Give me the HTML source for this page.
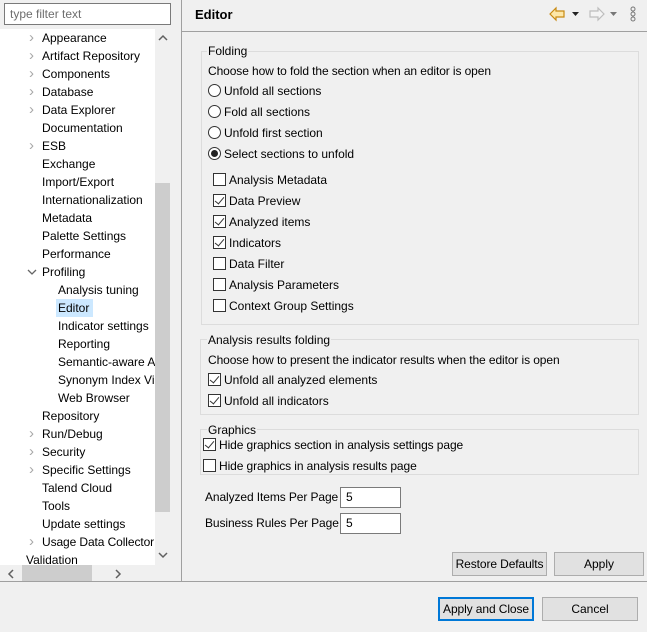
<!DOCTYPE html>
<html><head><meta charset="utf-8"><style>
*{box-sizing:border-box;margin:0;padding:0}
body{width:647px;height:632px;background:#f0f0f0;font-family:"Liberation Sans",sans-serif;font-size:12px;color:#000;position:relative;overflow:hidden}
.a{position:absolute;white-space:nowrap;line-height:16px}
.t{position:absolute;white-space:nowrap;line-height:18px;height:18px}
.chev{position:absolute;color:#a8a8a8;font-size:15px;line-height:18px}
.box{position:absolute;border:1px solid #dcdcdc}
.leg{position:absolute;background:#f0f0f0;padding:0 1px;line-height:14px}
.rb{position:absolute;width:13px;height:13px;border:1px solid #333;border-radius:50%;background:#fff}
.cb{position:absolute;width:13px;height:13px;border:1px solid #333;background:#fff}
.cb.c::after{content:"";position:absolute;left:3px;top:0px;width:4px;height:8px;border:solid #333;border-width:0 1.3px 1.3px 0;transform:rotate(40deg)}
.btn{position:absolute;border:1px solid #adadad;background:#e1e1e1;text-align:center;line-height:22px}
.inp{position:absolute;border:1px solid #7a7a7a;background:#fff;padding-left:5px;line-height:18px}
.sm{letter-spacing:-0.1px}
</style></head><body>
<div class="inp" style="left:4px;top:3px;width:167px;height:22px;color:#6d6d6d;line-height:20px">type filter text</div>
<div style="position:absolute;left:0;top:29px;width:155px;height:536px;background:#fff"></div>
<div style="position:absolute;left:155px;top:29px;width:15px;height:536px;background:#f0f0f0"></div>
<div style="position:absolute;left:155px;top:183px;width:15px;height:329px;background:#cdcdcd"></div>
<svg style="position:absolute;left:158px;top:34px" width="10" height="8"><path d="M1 6 L5 2 L9 6" fill="none" stroke="#606060" stroke-width="1.5"/></svg>
<svg style="position:absolute;left:158px;top:551px" width="10" height="8"><path d="M1 2 L5 6 L9 2" fill="none" stroke="#606060" stroke-width="1.5"/></svg>
<div style="position:absolute;left:0;top:565px;width:155px;height:16px;background:#f0f0f0"></div>
<div style="position:absolute;left:22px;top:565px;width:70px;height:16px;background:#cdcdcd"></div>
<svg style="position:absolute;left:7px;top:569px" width="8" height="10"><path d="M6 1 L2 5 L6 9" fill="none" stroke="#606060" stroke-width="1.5"/></svg>
<svg style="position:absolute;left:114px;top:569px" width="8" height="10"><path d="M2 1 L6 5 L2 9" fill="none" stroke="#606060" stroke-width="1.5"/></svg>
<div style="position:absolute;left:56px;top:299px;width:37px;height:18px;background:#cce8ff"></div>

<div class="chev" style="left:29px;top:29px">›</div><div class="t" style="left:42px;top:29px">Appearance</div>
<div class="chev" style="left:29px;top:47px">›</div><div class="t" style="left:42px;top:47px">Artifact Repository</div>
<div class="chev" style="left:29px;top:65px">›</div><div class="t" style="left:42px;top:65px">Components</div>
<div class="chev" style="left:29px;top:83px">›</div><div class="t" style="left:42px;top:83px">Database</div>
<div class="chev" style="left:29px;top:101px">›</div><div class="t" style="left:42px;top:101px">Data Explorer</div>
<div class="t" style="left:42px;top:119px">Documentation</div>
<div class="chev" style="left:29px;top:137px">›</div><div class="t" style="left:42px;top:137px">ESB</div>
<div class="t" style="left:42px;top:155px">Exchange</div>
<div class="t" style="left:42px;top:173px">Import/Export</div>
<div class="t" style="left:42px;top:191px;width:113px;overflow:hidden">Internationalization</div>
<div class="t" style="left:42px;top:209px">Metadata</div>
<div class="t" style="left:42px;top:227px">Palette Settings</div>
<div class="t" style="left:42px;top:245px">Performance</div>
<svg style="position:absolute;left:27px;top:268px" width="10" height="8"><path d="M1 2 L5 6 L9 2" fill="none" stroke="#666" stroke-width="1.3"/></svg><div class="t" style="left:42px;top:263px">Profiling</div>
<div class="t" style="left:58px;top:281px">Analysis tuning</div>
<div class="t" style="left:58px;top:299px">Editor</div>
<div class="t" style="left:58px;top:317px;width:97px;overflow:hidden">Indicator settings</div>
<div class="t" style="left:58px;top:335px">Reporting</div>
<div class="t" style="left:58px;top:353px;width:97px;overflow:hidden">Semantic-aware Analysis</div>
<div class="t" style="left:58px;top:371px;width:97px;overflow:hidden">Synonym Index Viewer</div>
<div class="t" style="left:58px;top:389px">Web Browser</div>
<div class="t" style="left:42px;top:407px">Repository</div>
<div class="chev" style="left:29px;top:425px">›</div><div class="t" style="left:42px;top:425px">Run/Debug</div>
<div class="chev" style="left:29px;top:443px">›</div><div class="t" style="left:42px;top:443px">Security</div>
<div class="chev" style="left:29px;top:461px">›</div><div class="t" style="left:42px;top:461px">Specific Settings</div>
<div class="t" style="left:42px;top:479px">Talend Cloud</div>
<div class="t" style="left:42px;top:497px">Tools</div>
<div class="t" style="left:42px;top:515px">Update settings</div>
<div class="chev" style="left:29px;top:533px">›</div><div class="t sm" style="left:42px;top:533px;width:113px;overflow:hidden">Usage Data Collector</div>
<div class="t" style="left:26px;top:551px">Validation</div>

<div style="position:absolute;left:181px;top:0;width:1px;height:581px;background:#a0a0a0"></div>
<div style="position:absolute;left:182px;top:31px;width:465px;height:1px;background:#a0a0a0"></div>
<div style="position:absolute;left:0;top:581px;width:647px;height:1px;background:#a0a0a0"></div>
<div class="a" style="left:195px;top:7px;font-weight:bold;font-size:13px">Editor</div>
<svg style="position:absolute;left:548px;top:6px" width="95" height="16">
<path d="M2 8 L8 2 L8 5 L16 5 L16 11 L8 11 L8 14 Z" fill="#fde7a8" stroke="#c88a12" stroke-width="1.2"/>
<path d="M24 6 L31 6 L27.5 10 Z" fill="#222"/>
<path d="M56 8 L50 2 L50 5 L42 5 L42 11 L50 11 L50 14 Z" fill="#f4f4f4" stroke="#bdbdbd" stroke-width="1.2"/>
<path d="M62 6 L69 6 L65.5 10 Z" fill="#777"/>
<circle cx="85" cy="3" r="2" fill="none" stroke="#777"/><circle cx="85" cy="8" r="2" fill="none" stroke="#777"/><circle cx="85" cy="13" r="2" fill="none" stroke="#777"/>
</svg>

<div class="box" style="left:201px;top:51px;width:438px;height:274px"></div>
<div class="leg" style="left:207px;top:44px">Folding</div>
<div class="a sm" style="left:208px;top:63px">Choose how to fold the section when an editor is open</div>
<div class="rb" style="left:208px;top:84px"></div><div class="a" style="left:224px;top:83px">Unfold all sections</div>
<div class="rb" style="left:208px;top:105px"></div><div class="a" style="left:224px;top:104px">Fold all sections</div>
<div class="rb" style="left:208px;top:126px"></div><div class="a" style="left:224px;top:125px">Unfold first section</div>
<div class="rb" style="left:208px;top:147px"></div><div style="position:absolute;left:211px;top:150px;width:7px;height:7px;border-radius:50%;background:#222"></div><div class="a" style="left:224px;top:146px">Select sections to unfold</div>
<div class="cb" style="left:213px;top:173px"></div><div class="a" style="left:229px;top:172px">Analysis Metadata</div>
<div class="cb c" style="left:213px;top:194px"></div><div class="a" style="left:229px;top:193px">Data Preview</div>
<div class="cb c" style="left:213px;top:215px"></div><div class="a" style="left:229px;top:214px">Analyzed items</div>
<div class="cb c" style="left:213px;top:236px"></div><div class="a" style="left:229px;top:235px">Indicators</div>
<div class="cb" style="left:213px;top:257px"></div><div class="a" style="left:229px;top:256px">Data Filter</div>
<div class="cb" style="left:213px;top:278px"></div><div class="a" style="left:229px;top:277px">Analysis Parameters</div>
<div class="cb" style="left:213px;top:299px"></div><div class="a" style="left:229px;top:298px">Context Group Settings</div>

<div class="box" style="left:200px;top:339px;width:439px;height:76px"></div>
<div class="leg" style="left:207px;top:333px">Analysis results folding</div>
<div class="a sm" style="left:208px;top:352px">Choose how to present the indicator results when the editor is open</div>
<div class="cb c" style="left:208px;top:373px"></div><div class="a" style="left:224px;top:372px">Unfold all analyzed elements</div>
<div class="cb c" style="left:208px;top:394px"></div><div class="a" style="left:224px;top:393px">Unfold all indicators</div>

<div class="box" style="left:200px;top:429px;width:439px;height:46px"></div>
<div class="leg" style="left:207px;top:423px">Graphics</div>
<div class="cb c" style="left:203px;top:438px"></div><div class="a sm" style="left:219px;top:437px">Hide graphics section in analysis settings page</div>
<div class="cb" style="left:203px;top:459px"></div><div class="a sm" style="left:219px;top:458px">Hide graphics in analysis results page</div>

<div class="a sm" style="left:205px;top:489px">Analyzed Items Per Page</div>
<div class="inp" style="left:340px;top:487px;width:61px;height:21px">5</div>
<div class="a sm" style="left:205px;top:515px">Business Rules Per Page</div>
<div class="inp" style="left:340px;top:513px;width:61px;height:21px">5</div>

<div class="btn sm" style="left:452px;top:552px;width:95px;height:24px">Restore Defaults</div>
<div class="btn" style="left:554px;top:552px;width:90px;height:24px">Apply</div>
<div class="btn sm" style="left:438px;top:597px;width:96px;height:24px;border:2px solid #0078d7;line-height:20px">Apply and Close</div>
<div class="btn" style="left:542px;top:597px;width:96px;height:24px">Cancel</div>
</body></html>
